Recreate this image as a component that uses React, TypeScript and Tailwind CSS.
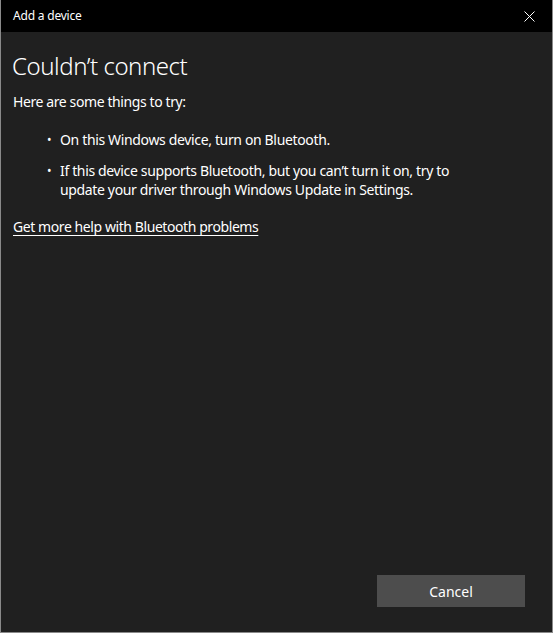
const FONT = "font-['Segoe_UI','Noto_Sans','Open_Sans',sans-serif]";

const TIPS = [
  "On this Windows device, turn on Bluetooth.",
  "If this device supports Bluetooth, but you can\u2019t turn it on, try to update your driver through Windows Update in Settings.",
];

export default function App() {
  return (
    <div
      className={`${FONT} flex h-[633px] w-[553px] flex-col border-x border-b border-[#8a8a8a] bg-[#202020] text-white`}
    >
      {/* title bar */}
      <div className="flex h-[32px] shrink-0 items-center justify-between bg-black pl-[12px]">
        <span className="text-[12px] tracking-[-0.2px]">Add a device</span>
        <button className="flex h-[32px] w-[46px] items-center justify-center" aria-label="Close">
          <svg width="11" height="11" viewBox="0 0 11 11" stroke="white" strokeWidth="1">
            <path d="M0.5 0.5 L10.5 10.5 M10.5 0.5 L0.5 10.5" />
          </svg>
        </button>
      </div>

      <div className="flex flex-1 flex-col px-[11px]">
        <h1 className="mt-[18px] text-[24px] leading-[32px] font-light tracking-[-0.45px]">
          Couldn&rsquo;t connect
        </h1>

        <p className="mt-[10px] pl-[1px] text-[14px] leading-[20px] tracking-[-0.4px]">
          Here are some things to try:
        </p>

        <ul className="mt-[18px] flex flex-col gap-[12px] pl-[34px] pr-[60px] text-[14px] leading-[19px] tracking-[-0.35px]">
          {TIPS.map((tip) => (
            <li key={tip} className="flex gap-[8px]">
              <span className="w-[6px] shrink-0 text-center text-[12px]">&bull;</span>
              <span>{tip}</span>
            </li>
          ))}
        </ul>

        <a
          href="#"
          className="mt-[18px] self-start pl-[1px] text-[14px] leading-[20px] tracking-[-0.42px] underline underline-offset-[3px]"
        >
          Get more help with Bluetooth problems
        </a>

        <div className="mt-auto flex justify-end pb-[25px] pr-[16px]">
          <button className="h-[32px] w-[148px] bg-[#4d4d4d] text-[14px]">Cancel</button>
        </div>
      </div>
    </div>
  );
}
